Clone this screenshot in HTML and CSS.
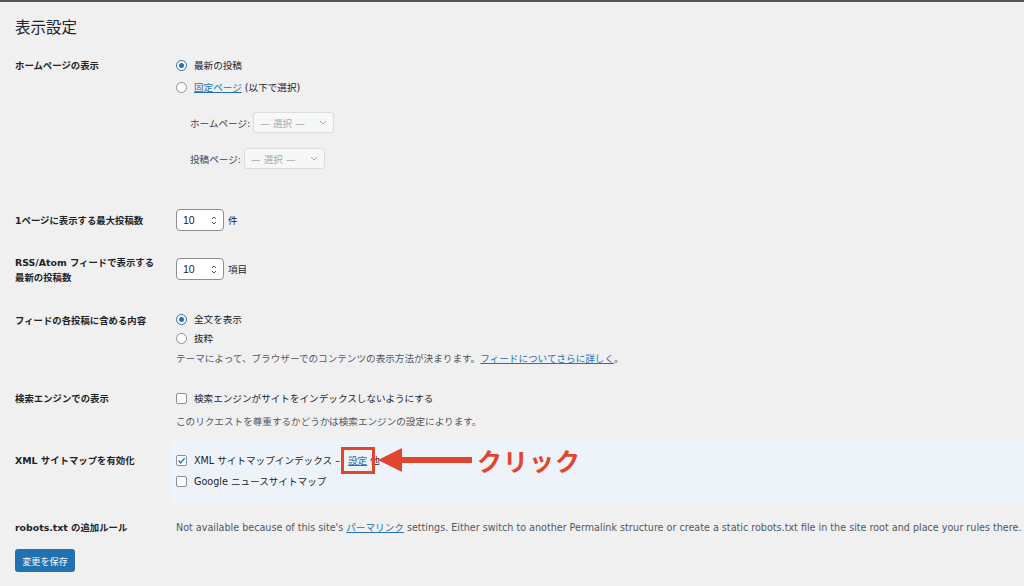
FILE: index.html
```html
<!DOCTYPE html>
<html lang="ja">
  <head>
    <meta charset="UTF-8" />
    <meta name="viewport" content="width=device-width, initial-scale=1.0" />
    <title>表示設定</title>
    <link rel="stylesheet" href="styles.css">
  </head>
  <body>
    <div class="topbar"></div>
    <div class="wrap">
      <h1>表示設定</h1>

      <form class="settings">
        <div class="row row-front">
          <div class="row-label">ホームページの表示</div>
          <div class="row-field">
            <ul class="choices wide">
              <li><span class="radio checked"></span>最新の投稿</li>
              <li><span class="radio"></span><a href="#">固定ページ</a>&nbsp;(以下で選択)</li>
            </ul>
            <div class="page-selects">
              <div class="sel-row">ホームページ: <span class="select">— 選択 —<svg viewBox="0 0 8 5" width="8" height="5"><path d="M1 1l3 3 3-3" fill="none" stroke="#a7aaad" stroke-width="1"/></svg></span></div>
              <div class="sel-row">投稿ページ: <span class="select">— 選択 —<svg viewBox="0 0 8 5" width="8" height="5"><path d="M1 1l3 3 3-3" fill="none" stroke="#a7aaad" stroke-width="1"/></svg></span></div>
            </div>
          </div>
        </div>

        <div class="row row-perpage">
          <div class="row-label">1ページに表示する最大投稿数</div>
          <div class="row-field">
            <span class="number">10<svg viewBox="0 0 6 11" width="6" height="11"><path d="M1 4l2-2 2 2M1 7l2 2 2-2" fill="none" stroke="#50575e" stroke-width="1"/></svg></span><span class="unit">件</span>
          </div>
        </div>

        <div class="row row-rss">
          <div class="row-label">RSS/Atom フィードで表示する<br>最新の投稿数</div>
          <div class="row-field">
            <span class="number">10<svg viewBox="0 0 6 11" width="6" height="11"><path d="M1 4l2-2 2 2M1 7l2 2 2-2" fill="none" stroke="#50575e" stroke-width="1"/></svg></span><span class="unit">項目</span>
          </div>
        </div>

        <div class="row row-feed">
          <div class="row-label">フィードの各投稿に含める内容</div>
          <div class="row-field">
            <ul class="choices">
              <li><span class="radio checked"></span>全文を表示</li>
              <li><span class="radio"></span>抜粋</li>
            </ul>
            <p class="desc">テーマによって、ブラウザーでのコンテンツの表示方法が決まります。<a href="#">フィードについてさらに詳しく</a>。</p>
          </div>
        </div>

        <div class="row row-search">
          <div class="row-label">検索エンジンでの表示</div>
          <div class="row-field">
            <ul class="choices">
              <li><span class="check"></span>検索エンジンがサイトをインデックスしないようにする</li>
            </ul>
            <p class="desc">このリクエストを尊重するかどうかは検索エンジンの設定によります。</p>
          </div>
        </div>

        <div class="row row-sitemap">
          <div class="row-label">XML サイトマップを有効化</div>
          <div class="row-field">
            <ul class="choices tall">
              <li class="marked">
                <span class="check checked"><svg viewBox="0 0 11 11" width="11" height="11"><path d="M2.5 5.6l2.2 2.3 4-4.8" fill="none" stroke="#2271b1" stroke-width="1.4"/></svg></span>XML サイトマップインデックス&nbsp;–&nbsp;<a href="#" class="boxed">設定</a>&nbsp;他
                <span class="callout">
                  <svg viewBox="0 0 94 26" width="94" height="26"><path d="M0 13L24 1V10H94V16H24V25Z" fill="#e2452d"/></svg>
                  <span class="callout-text">クリック</span>
                </span>
              </li>
              <li><span class="check"></span>Google ニュースサイトマップ</li>
            </ul>
          </div>
        </div>

        <div class="row row-robots">
          <div class="row-label">robots.txt の追加ルール</div>
          <div class="row-field">
            <p class="desc">Not available because of this site's <a href="#">パーマリンク</a> settings. Either switch to another Permalink structure or create a static robots.txt file in the site root and place your rules there.</p>
          </div>
        </div>

        <button type="button" class="save-btn">変更を保存</button>
      </form>
    </div>
  </body>
</html>
```

FILE: styles.css
```css
* {
  box-sizing: border-box;
}

body {
  margin: 0;
  background-color: #f0f0f1;
  color: #1d2327;
  font-family: "DejaVu Sans", "Noto Sans CJK JP", sans-serif;
  font-size: 9.6px;
  overflow: hidden;
}

a {
  color: #2271b1;
  text-decoration: underline;
}

.topbar {
  height: 2px;
  background-color: #50575e;
}

.wrap {
  padding: 0 15px;
}

h1 {
  margin: 0;
  padding-top: 14px;
  font-family: "Noto Sans CJK JP", sans-serif;
  font-size: 15.5px;
  font-weight: 400;
  line-height: 20px;
}

.settings {
  margin-top: 18px;
}

.row {
  display: grid;
  grid-template-columns: 161px 1fr;
  align-items: start;
}

.row-label {
  font-family: "DejaVu Sans", "Noto Sans CJK JP", sans-serif;
  font-size: 9.4px;
  font-weight: 700;
  line-height: 15px;
}

.choices {
  margin: 0;
  padding: 0;
  list-style: none;
}

.choices li {
  display: flex;
  align-items: center;
  height: 19px;
  line-height: 15px;
  white-space: nowrap;
}

.choices.wide li {
  height: 22px;
}

.choices.tall li {
  height: 21px;
}

.radio,
.check {
  width: 11px;
  height: 11px;
  flex-shrink: 0;
  margin-right: 7px;
  border: 1px solid #8c8f94;
  background-color: #fff;
  display: flex;
  align-items: center;
  justify-content: center;
}

.radio {
  border-radius: 50%;
}

.radio.checked {
  border-color: #2271b1;
}

.radio.checked::after {
  content: "";
  width: 5px;
  height: 5px;
  border-radius: 50%;
  background-color: #2271b1;
}

.check {
  border-radius: 2px;
}

.check svg {
  display: block;
  margin: -1px;
}

.desc {
  margin: 0;
  line-height: 15px;
  color: #50575e;
}

/* front page row */
.row-front .row-label {
  padding-top: 4px;
}

.page-selects {
  margin-top: 14px;
  padding-left: 14px;
  display: flex;
  flex-direction: column;
  gap: 15px;
}

.sel-row {
  display: flex;
  align-items: center;
  height: 21px;
  color: #3c434a;
}

.select {
  margin-left: 3px;
  width: 81px;
  height: 21px;
  padding: 0 6px;
  border: 1px solid #dcdcde;
  border-radius: 3px;
  background-color: #f6f7f7;
  color: #a7aaad;
  display: flex;
  align-items: center;
  justify-content: space-between;
}

/* number inputs */
.row-perpage {
  margin-top: 40px;
}

.row-perpage .row-label {
  padding-top: 4px;
}

.row-field {
  display: block;
}

.row-perpage .row-field,
.row-rss .row-field {
  display: flex;
  align-items: center;
}

.row-rss {
  margin-top: 24px;
}

.row-rss .row-field {
  padding-top: 3px;
}

.number {
  width: 48px;
  height: 22px;
  padding: 0 6px 0 6px;
  border: 1px solid #8c8f94;
  border-radius: 4px;
  background-color: #fff;
  font-family: "Liberation Sans", sans-serif;
  font-size: 10.5px;
  display: flex;
  align-items: center;
  justify-content: space-between;
}

.unit {
  margin-left: 4px;
}

/* feed row */
.row-feed {
  margin-top: 25px;
}

.row-feed .row-label {
  padding-top: 3px;
}

.row-feed .desc {
  margin-top: 3px;
}

/* search row */
.row-search {
  margin-top: 23px;
}

.row-search .row-label {
  padding-top: 2px;
}

.row-search .desc {
  margin-top: 6px;
}

/* sitemap row */
.row-sitemap {
  margin-top: 10px;
}

.row-sitemap .row-label {
  padding-top: 14px;
}

.row-sitemap .row-field {
  margin: 0 -15px 0 -6px;
  padding: 11px 15px 13px 6px;
  background-color: #eef3fa;
}

.marked {
  position: relative;
}

.boxed {
  position: relative;
  margin-left: 5px;
}

.boxed::after {
  content: "";
  position: absolute;
  left: -7px;
  right: -8px;
  top: -6px;
  bottom: -6px;
  border: 3px solid #e2452d;
}

.callout {
  position: absolute;
  left: 202px;
  top: -3px;
  display: flex;
  align-items: center;
}

.callout svg {
  display: block;
}

.callout-text {
  margin-left: 5px;
  color: #e2452d;
  font-family: "Noto Sans CJK JP", sans-serif;
  font-size: 25px;
  font-weight: 700;
  line-height: 26px;
  letter-spacing: 1px;
}

/* robots row */
.row-robots {
  margin-top: 15px;
}

.row-robots .desc {
  white-space: nowrap;
}

.save-btn {
  margin-top: 14px;
  width: 60px;
  height: 23px;
  padding: 0;
  border: none;
  border-radius: 3px;
  background-color: #2271b1;
  color: #fff;
  font-family: "Noto Sans CJK JP", sans-serif;
  font-size: 9.1px;
}
```
